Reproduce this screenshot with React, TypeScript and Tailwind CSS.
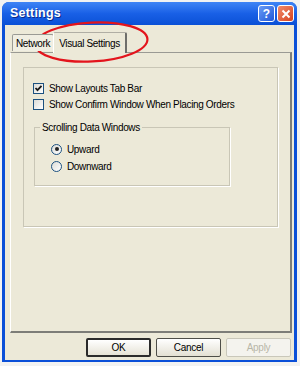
import React from "react";

const font = { fontFamily: '"Liberation Sans", Arial, sans-serif' };

function Check({ checked }: { checked?: boolean }) {
  return (
    <div className="w-[11px] h-[11px] border border-[#1c5180] bg-gradient-to-br from-[#dcdcd7] to-white flex items-center justify-center">
      {checked && (
        <svg width="9" height="9" viewBox="0 0 9 9">
          <path d="M1.5 4 L3.5 6.2 L7.5 1.8" stroke="#1a1a1a" strokeWidth="1.8" fill="none" />
        </svg>
      )}
    </div>
  );
}

function Radio({ checked }: { checked?: boolean }) {
  return (
    <div className="w-[11px] h-[11px] rounded-full border border-[#1c5180] bg-gradient-to-br from-[#dcdcd7] to-white flex items-center justify-center">
      {checked && <div className="w-[4px] h-[4px] rounded-full bg-[#222]" />}
    </div>
  );
}

function Btn({ children, def, disabled }: { children: React.ReactNode; def?: boolean; disabled?: boolean }) {
  return (
    <div
      className={
        "w-[65px] h-[19px] rounded-[2px] flex items-center justify-center text-[10px] tracking-[-0.3px] " +
        (def
          ? "border-[2px] border-[#2b2b2b] bg-gradient-to-b from-white to-[#e6e3d6] text-black"
          : disabled
          ? "border border-[#c9c7ba] bg-[#f4f3ee] text-[#b8b6a8]"
          : "border border-[#4e4e48] bg-gradient-to-b from-white to-[#e3e0d3] text-black")
      }
    >
      {children}
    </div>
  );
}

export default function App() {
  return (
    <div className="relative w-[300px] h-[366px] bg-[#f2f2f2] pl-[2px] pt-[2px] pr-[3px] pb-[4px]" style={font}>
      <div className="flex flex-col h-full rounded-t-[7px] overflow-hidden bg-[#0a4fd8]">
        {/* title bar */}
        <div className="h-[23px] shrink-0 flex items-center justify-between pl-[8px] pr-[3px] bg-gradient-to-b from-[#3f84f5] via-[#1960e6] to-[#0a50d6]">
          <span className="text-white font-bold text-[12.5px] tracking-[0.2px]" style={{ textShadow: "1px 1px 0 #0a2a8a" }}>
            Settings
          </span>
          <div className="flex gap-[2px]">
            <div className="w-[17px] h-[17px] rounded-[3px] border border-white bg-gradient-to-br from-[#6a9bf5] to-[#1f56d8] flex items-center justify-center text-white font-bold text-[12px] leading-none">
              ?
            </div>
            <div className="w-[17px] h-[17px] rounded-[3px] border border-white bg-gradient-to-br from-[#f08a6a] to-[#d6401a] flex items-center justify-center">
              <svg width="10" height="10" viewBox="0 0 10 10">
                <path d="M1.5 1.5 L8.5 8.5 M8.5 1.5 L1.5 8.5" stroke="white" strokeWidth="2" />
              </svg>
            </div>
          </div>
        </div>
        {/* body */}
        <div className="flex-1 mx-[3px] mb-[3px] bg-[#ece9d8] flex flex-col pt-[7px] pl-[5px] pr-[2px] pb-[3px] text-[10px] tracking-[-0.35px] text-black">
          {/* tabs */}
          <div className="flex items-end h-[20px] pl-[2px] relative z-10">
            <div className="w-[42px] h-[17px] mb-[1px] border border-b-0 border-[#9a9a94] rounded-t-[2px] bg-[#f0eee2] flex items-center justify-center">
              Network
            </div>
            <div className="w-[74px] h-[21px] -mb-[1px] border border-b-0 border-[#b0aea4] border-l-white rounded-t-[2px] bg-[#ece9d8] flex items-center justify-center -ml-[1px] border-r-[2px] border-r-[#6e6e6a]">
              Visual Settings
            </div>
          </div>
          {/* panel */}
          <div className="h-[281px] border-t border-l border-t-[#9a9a94] border-l-white border-r-[2px] border-r-[#7d7d78] border-b-[2px] border-b-[#7d7d78] px-[12px] pt-[14px]">
            <div className="h-[160px] border border-[#c9c6b6] shadow-[1px_1px_0_white] pl-[9px] pt-[13px]">
              <div className="flex items-center gap-[5px] h-[15px]">
                <Check checked />
                <span>Show Layouts Tab Bar</span>
              </div>
              <div className="flex items-center gap-[5px] h-[15px] mt-[1px]">
                <Check />
                <span>Show Confirm Window When Placing Orders</span>
              </div>
              <div className="relative mt-[15px] ml-[1px] w-[196px] h-[59px] border border-[#c9c6b6] shadow-[1px_1px_0_white] pl-[16px] pt-[13px]">
                <span className="absolute -top-[7px] left-[5px] px-[2px] bg-[#ece9d8] leading-[13px]">Scrolling Data Windows</span>
                <div className="flex items-center gap-[5px] h-[16px]">
                  <Radio checked />
                  <span>Upward</span>
                </div>
                <div className="flex items-center gap-[5px] h-[16px] mt-[1px]">
                  <Radio />
                  <span>Downward</span>
                </div>
              </div>
            </div>
          </div>
          {/* buttons */}
          <div className="flex justify-end gap-[5px] mt-[5px] pr-[1px]">
            <Btn def>OK</Btn>
            <Btn>Cancel</Btn>
            <Btn disabled>Apply</Btn>
          </div>
        </div>
      </div>
      {/* red annotation ellipse */}
      <svg className="absolute left-0 top-0 pointer-events-none" width="300" height="366">
        <ellipse cx="91.5" cy="42" rx="56" ry="19.5" fill="none" stroke="#e3141c" strokeWidth="2.2" transform="rotate(-3 91.5 42)" />
      </svg>
    </div>
  );
}
